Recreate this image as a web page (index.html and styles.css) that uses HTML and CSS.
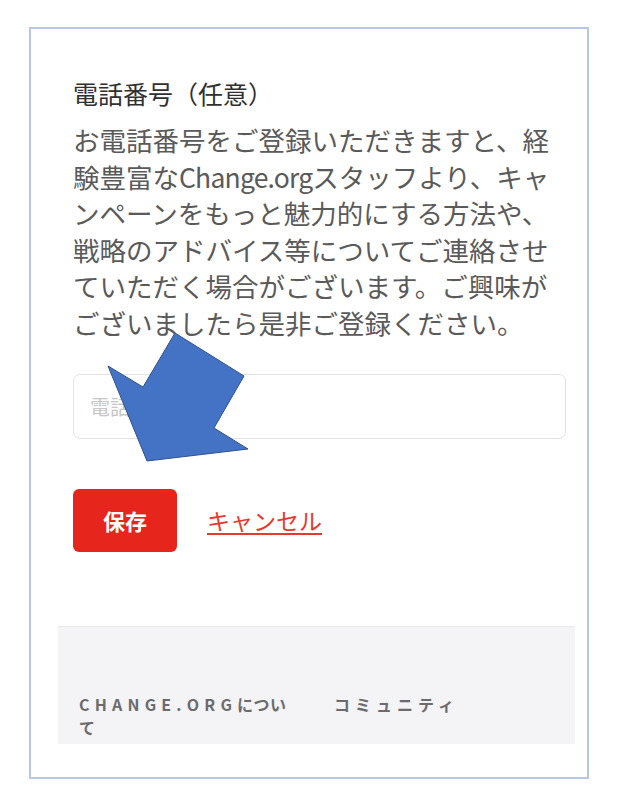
FILE: index.html
```html
<!DOCTYPE html>
<html lang="ja">
<head>
<meta charset="utf-8">
<title>電話番号（任意）</title>
<link rel="stylesheet" href="styles.css">
</head>
<body>
<div class="frame">
  <section class="form">
    <h2 class="title">電話番号（任意）</h2>
    <p class="desc">お電話番号をご登録いただきますと、経<br>験豊富な<span class="latin">Change.org</span>スタッフより、キャ<br>ンペーンをもっと魅力的にする方法や、<br>戦略のアドバイス等についてご連絡させ<br>ていただく場合がございます。ご興味が<br>ございましたら是非ご登録ください。</p>
    <input class="phone" type="tel" placeholder="電話番号">
    <div class="actions">
      <button class="save" type="button">保存</button>
      <a class="cancel" href="#">キャンセル</a>
    </div>
  </section>
  <footer class="footer">
    <div class="cols">
      <div class="col"><span class="caps">CHANGE.ORG</span><span class="kana">につい</span><br><span class="kana">て</span></div>
      <div class="col wide">コミュニティ</div>
    </div>
  </footer>
</div>
<svg class="arrow" width="617" height="810" viewBox="0 0 617 810" aria-hidden="true">
  <polygon points="175,333 244,376 214,428 248,449 147,461 108,366 143,387" fill="#4472c4" stroke="#2f528f" stroke-width="1"/>
</svg>
</body>
</html>
```
FILE: styles.css
```css
* { box-sizing: border-box; }
html, body { margin: 0; padding: 0; background: #fff; }
body {
  width: 617px;
  height: 810px;
  position: relative;
  overflow: hidden;
  font-family: "Noto Sans CJK JP", "Noto Sans", sans-serif;
}
.frame {
  margin: 27px 0 0 29px;
  width: 560px;
  height: 752px;
  border: 2px solid #b7c7e6;
  background: #fff;
  display: flex;
  flex-direction: column;
}
.form {
  padding: 48px 22px 0 42px;
}
.title {
  margin: 0;
  font-size: 25px;
  line-height: 32px;
  font-weight: 400;
  color: #303030;
}
.desc {
  margin: 13px 0 0;
  font-size: 26.5px;
  line-height: 36.6px;
  color: #5a5a5a;
  white-space: nowrap;
}
.latin { letter-spacing: -0.8px; }
.phone {
  display: block;
  margin-top: 32px;
  width: 493px;
  height: 65px;
  border: 1.5px solid #e3e3e3;
  border-radius: 7px;
  padding: 0 16px;
  font-family: "Noto Sans CJK JP", sans-serif;
  font-size: 20px;
  color: #333;
  outline: none;
}
.phone::placeholder { color: #c6c6c6; }
.actions {
  margin-top: 50px;
  display: flex;
  align-items: center;
  gap: 30px;
}
.save {
  width: 104px;
  height: 63px;
  border: none;
  border-radius: 6px;
  background: #e6261c;
  color: #fff;
  font-family: "Noto Sans CJK JP", sans-serif;
  font-size: 22px;
  font-weight: 700;
  padding: 0;
}
.cancel {
  color: #e9392e;
  font-size: 23px;
  text-decoration: underline;
  text-underline-offset: 3px;
  text-decoration-thickness: 1.5px;
}
.footer {
  margin: 74px 12px 0 27px;
  height: 118px;
  background: #f4f3f5;
  border-top: 1px solid #e9e8ea;
  overflow: hidden;
  padding: 66px 21px 0;
}
.cols {
  display: grid;
  grid-template-columns: 215px 1fr;
  column-gap: 40px;
}
.col {
  font-size: 16px;
  line-height: 23.5px;
  font-weight: 700;
  color: #6b6b6e;
}
.caps { letter-spacing: 5.2px; }
.kana { letter-spacing: 0.5px; }
.wide { letter-spacing: 5px; }
.arrow {
  position: absolute;
  left: 0;
  top: 0;
  pointer-events: none;
}
```
